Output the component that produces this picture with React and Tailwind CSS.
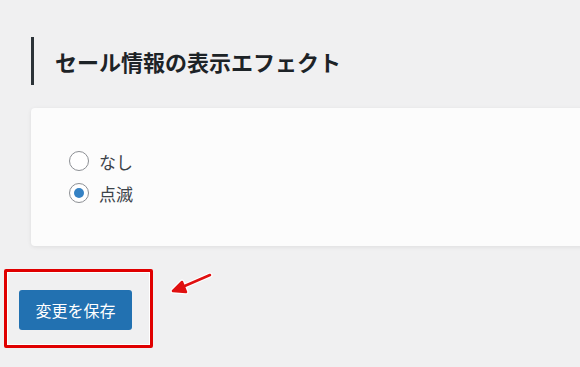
import React from 'react';

const options = [
    { label: 'なし', checked: false },
    { label: '点滅', checked: true },
];

const Radio = ({ checked }) => (
    <span className="w-5 h-5 rounded-full border border-[#8c8f94] bg-white flex items-center justify-center shrink-0">
        {checked && <span className="w-[10px] h-[10px] rounded-full bg-[#3582c4]"></span>}
    </span>
);

const App = () => {
    return (
        <div
            className="relative min-h-[367px] bg-[#f0f0f1] overflow-hidden pt-[37px]"
            style={{ fontFamily: '"Noto Sans CJK JP", "Noto Sans", sans-serif' }}
        >
            {/* Section heading */}
            <div className="ml-[31px] h-[48px] border-l-[3px] border-[#2c3338] pl-[21px] flex items-center">
                <h2 className="text-[22px] font-bold text-[#1d2327] leading-none">セール情報の表示エフェクト</h2>
            </div>

            {/* Settings card */}
            <div className="ml-[31px] mt-[23px] w-[580px] h-[138px] bg-[#fcfcfc] rounded-[4px] shadow-[0_1px_4px_rgba(0,0,0,0.08)] pt-[37px] pl-[38px]">
                {options.map(opt => (
                    <label key={opt.label} className="h-8 flex items-center gap-[10px] text-[17px] text-[#3c434a]">
                        <Radio checked={opt.checked} />
                        <span className="leading-none">{opt.label}</span>
                    </label>
                ))}
            </div>

            {/* Highlighted save button */}
            <div className="ml-[4px] mt-[23px] w-[149px] h-[79px] border-[3px] border-[#e00000] rounded-[2px] shadow-[inset_0_0_0_1px_white] pl-[12px] pt-[18px]">
                <button className="w-[113px] h-[40px] bg-[#2271b1] rounded-[3px] text-white text-[16px]">
                    変更を保存
                </button>
            </div>

            {/* Annotation arrow */}
            <svg className="absolute left-[166px] top-[268px]" width="52" height="32" viewBox="166 268 52 32">
                <g stroke="white" strokeWidth="5" strokeLinecap="round" strokeLinejoin="round" fill="white">
                    <line x1="210" y1="275" x2="180" y2="288" />
                    <polygon points="173,291 182,282 186,292" />
                </g>
                <g stroke="#e01010" strokeWidth="2.5" strokeLinecap="round" strokeLinejoin="round" fill="#e01010">
                    <line x1="210" y1="275" x2="180" y2="288" />
                    <polygon points="173,291 182,282 186,292" />
                </g>
            </svg>
        </div>
    );
};

export default App;
